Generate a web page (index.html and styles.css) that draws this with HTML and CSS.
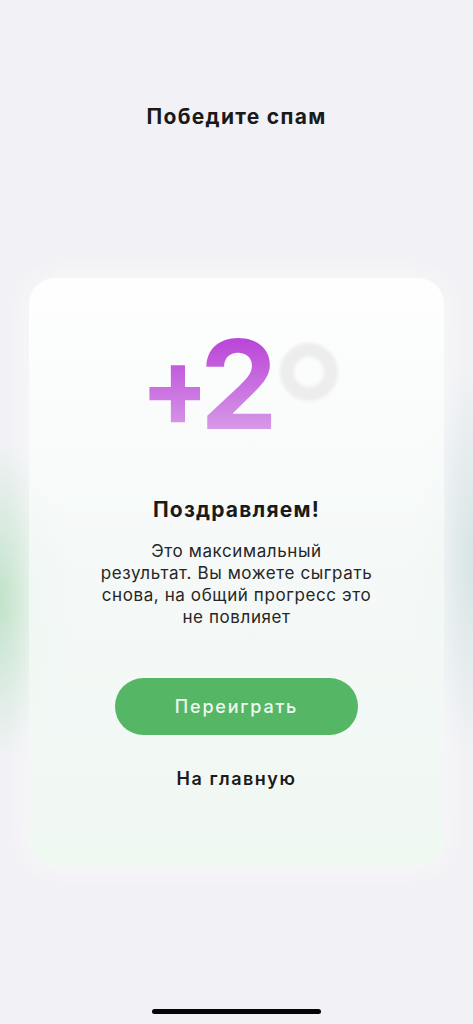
FILE: index.html
```html
<!DOCTYPE html>
<html lang="ru">

<head>
    <meta charset="UTF-8">
    <title>Победите спам</title>
    <link rel="stylesheet" href="styles.css">
</head>

<body>
    <div class="screen">
        <h1 class="title">Победите спам</h1>
        <div class="card">
            <div class="score">
                <span class="score-plus">+</span>
                <span class="score-num">2</span>
                <span class="ring"></span>
            </div>
            <h2 class="card-title">Поздравляем!</h2>
            <p class="card-text">Это максимальный<br>результат. Вы можете сыграть<br>снова, на общий прогресс это<br>не повлияет</p>
            <button class="btn" type="button">Переиграть</button>
            <a class="link" href="#">На главную</a>
        </div>
        <div class="home-bar"></div>
    </div>
</body>

</html>
```

FILE: styles.css
```css
body {
    margin: 0;
    padding: 0;
    font-family: Inter, 'Noto Sans', Arial, sans-serif;
    color: #1a1a1a;
    background:
        radial-gradient(ellipse 70px 160px at 0% 600px, rgba(120, 205, 135, 0.4), rgba(120, 205, 135, 0) 100%),
        radial-gradient(ellipse 60px 200px at 100% 560px, rgba(150, 200, 190, 0.3), rgba(150, 200, 190, 0) 100%),
        #f2f2f6;
}

.screen {
    width: 473px;
    height: 1024px;
    display: flex;
    flex-direction: column;
    align-items: center;
}

.title {
    margin: 102px 0 0 0;
    font-size: 21px;
    font-weight: 700;
    letter-spacing: 1.3px;
    line-height: 30px;
}

.card {
    margin-top: 146px;
    width: 415px;
    height: 588px;
    box-sizing: border-box;
    border-radius: 26px;
    background: linear-gradient(180deg, rgba(255, 255, 255, 0.92) 0%, rgba(245, 250, 248, 0.85) 50%, rgba(240, 249, 242, 0.9) 100%);
    box-shadow: 0 0 30px rgba(255, 255, 255, 0.6);
    display: flex;
    flex-direction: column;
    align-items: center;
    padding-top: 50px;
}

.score {
    display: flex;
    align-items: flex-start;
    margin-left: 4px;
    height: 120px;
}

.score-plus,
.score-num {
    font-weight: 700;
    background: linear-gradient(180deg, #b73bd6 0%, #cc79e2 60%, #dba3ea 100%);
    -webkit-background-clip: text;
    background-clip: text;
    color: transparent;
}

.score-plus {
    font-size: 114px;
    line-height: 112px;
    margin-top: 2px;
    letter-spacing: -17px;
}

.score-num {
    font-size: 124px;
    line-height: 112px;
}

.ring {
    flex-shrink: 0;
    width: 58px;
    height: 58px;
    box-sizing: border-box;
    border-radius: 50%;
    border: 14px solid #ededed;
    margin: 15px 0 0 2px;
    filter: blur(1.5px);
}

.card-title {
    margin: 48px 0 0 0;
    font-size: 21px;
    font-weight: 700;
    letter-spacing: 1.2px;
    line-height: 28px;
}

.card-text {
    margin: 16px 0 0 0;
    text-align: center;
    font-size: 17px;
    line-height: 22px;
    letter-spacing: 0.6px;
    color: #262626;
}

.btn {
    margin-top: 50px;
    width: 243px;
    height: 57px;
    border: none;
    border-radius: 29px;
    background: #55b766;
    color: #eef8ef;
    font-family: inherit;
    font-size: 18px;
    font-weight: 500;
    letter-spacing: 1.8px;
    cursor: pointer;
}

.link {
    margin-top: 33px;
    font-size: 18px;
    font-weight: 600;
    letter-spacing: 1.5px;
    color: #1a1a1a;
    text-decoration: none;
}

.home-bar {
    margin-top: auto;
    margin-bottom: 10px;
    width: 169px;
    height: 5px;
    border-radius: 3px;
    background: #050505;
}
```
